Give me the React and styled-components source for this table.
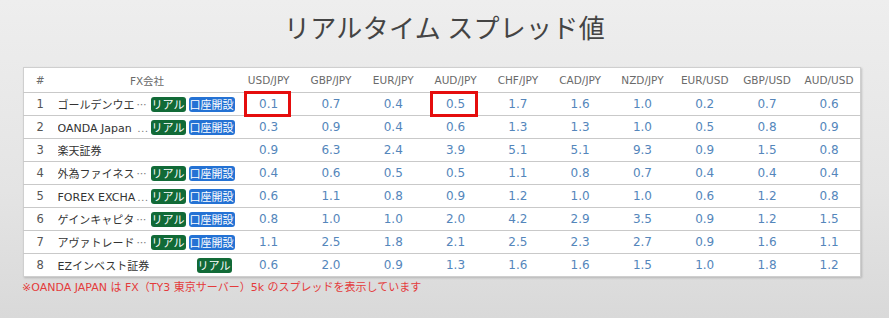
import React from "react";
import styled, { createGlobalStyle, css } from "styled-components";

const GlobalStyle = createGlobalStyle`
  html, body {
    margin: 0;
    padding: 0;
  }
  body {
    background: linear-gradient(to bottom, #eeeeee 0%, #e4e4e4 60%, #d9d9d9 100%);
    min-height: 318px;
    font-family: "DejaVu Sans", "Noto Sans CJK JP", sans-serif;
  }
`;

const Page = styled.div`
  width: 889px;
  height: 318px;
  padding-top: 10px;
  box-sizing: border-box;
`;

const Title = styled.h1`
  margin: 0 0 23px;
  text-align: center;
  font-family: "Noto Sans CJK JP", sans-serif;
  font-weight: 400;
  font-size: 26px;
  line-height: 34px;
  color: #444;
  letter-spacing: 0.3px;
`;

const TableWrap = styled.div`
  margin-left: 23px;
  width: 838px;
`;

const Table = styled.table`
  width: 100%;
  table-layout: fixed;
  border-collapse: collapse;
  background: #fff;
  border: 1px solid #cfcfcf;
  box-shadow: 1px 1px 2px rgba(0, 0, 0, 0.18);
`;

const HeadCell = styled.th`
  height: 24px;
  padding: 0;
  font-weight: 400;
  font-size: 10.5px;
  color: #6a6a6a;
  text-align: center;
  border-bottom: 1px solid #c9c9c9;
  font-family: "DejaVu Sans", "Noto Sans CJK JP", sans-serif;
`;

const Row = styled.tr`
  height: 23px;
  & + & td {
    border-top: 1px solid #c9c9c9;
  }
`;

const NumCell = styled.td`
  padding: 0;
  text-align: center;
  font-size: 11.5px;
  color: #555;
`;

const NameCell = styled.td`
  padding: 0 3px 0 1px;
`;

const NameBox = styled.div`
  display: flex;
  align-items: center;
  gap: 3px;
`;

const NameText = styled.span`
  flex: 1;
  min-width: 0;
  overflow: hidden;
  white-space: nowrap;
  font-size: 11px;
  color: #333;
`;

// cut-off marker after a shortened company name
const More = styled.span`
  margin-left: 2px;
  font-family: "Noto Sans CJK JP", sans-serif;
  font-size: 10px;
  color: #777;
`;

const Badge = styled.span`
  flex: none;
  height: 15px;
  line-height: 15px;
  padding: 0 1px;
  border-radius: 3px;
  color: #fff;
  font-family: "Noto Sans CJK JP", sans-serif;
  font-size: 11px;
  background: ${p => (p.blue ? "#2472d4" : "#116a37")};
  ${p =>
    p.alone &&
    css`
      margin-right: 3px;
    `}
`;

const ValueCell = styled.td`
  position: relative;
  padding: 0;
  text-align: center;
  font-size: 12px;
  color: #5486bb;
  ${p =>
    p.marked &&
    css`
      &::after {
        content: "";
        position: absolute;
        left: 6px;
        right: 9px;
        top: -2px;
        bottom: -2px;
        border: 3px solid #e50d0d;
      }
    `}
`;

const Note = styled.p`
  margin: 3px 0 0 -1px;
  font-family: "DejaVu Sans", "Noto Sans CJK JP", sans-serif;
  font-size: 11px;
  line-height: 16px;
  color: #e43b3b;
`;

const pairs = [
  "USD/JPY",
  "GBP/JPY",
  "EUR/JPY",
  "AUD/JPY",
  "CHF/JPY",
  "CAD/JPY",
  "NZD/JPY",
  "EUR/USD",
  "GBP/USD",
  "AUD/USD"
];

const rows = [
  { name: "ゴールデンウエイ・ジャパン", short: "ゴールデンウエ", real: true, open: true, vals: "0.1 0.7 0.4 0.5 1.7 1.6 1.0 0.2 0.7 0.6" },
  { name: "OANDA Japan 株式会社", short: "OANDA Japan ", real: true, open: true, vals: "0.3 0.9 0.4 0.6 1.3 1.3 1.0 0.5 0.8 0.9" },
  { name: "楽天証券", vals: "0.9 6.3 2.4 3.9 5.1 5.1 9.3 0.9 1.5 0.8" },
  { name: "外為ファイネスト", short: "外為ファイネス", real: true, open: true, vals: "0.4 0.6 0.5 0.5 1.1 0.8 0.7 0.4 0.4 0.4" },
  { name: "FOREX EXCHANGE", short: "FOREX EXCHA", real: true, open: true, vals: "0.6 1.1 0.8 0.9 1.2 1.0 1.0 0.6 1.2 0.8" },
  { name: "ゲインキャピタル・ジャパン", short: "ゲインキャピタ", real: true, open: true, vals: "0.8 1.0 1.0 2.0 4.2 2.9 3.5 0.9 1.2 1.5" },
  { name: "アヴァトレード・ジャパン", short: "アヴァトレード", real: true, open: true, vals: "1.1 2.5 1.8 2.1 2.5 2.3 2.7 0.9 1.6 1.1" },
  { name: "EZインベスト証券", real: true, vals: "0.6 2.0 0.9 1.3 1.6 1.6 1.5 1.0 1.8 1.2" }
];

// cells outlined in red on the first row (USD/JPY, AUD/JPY)
const marked = [0, 3];

function SpreadRow({ no, row }) {
  return (
    <Row>
      <NumCell>{no}</NumCell>
      <NameCell>
        <NameBox>
          <NameText title={row.name}>
            {row.short || row.name}
            {row.short && <More>…</More>}
          </NameText>
          {row.real && <Badge alone={!row.open}>リアル</Badge>}
          {row.open && <Badge blue>口座開設</Badge>}
        </NameBox>
      </NameCell>
      {row.vals.split(" ").map((v, i) => (
        <ValueCell key={i} marked={no === 1 && marked.includes(i)}>
          {v}
        </ValueCell>
      ))}
    </Row>
  );
}

export default function App() {
  return (
    <Page>
      <GlobalStyle />
      <Title>リアルタイム スプレッド値</Title>
      <TableWrap>
        <Table>
          <colgroup>
            <col style={{ width: 33 }} />
            <col style={{ width: 181 }} />
            {pairs.map(p => (
              <col key={p} />
            ))}
          </colgroup>
          <thead>
            <tr>
              <HeadCell>#</HeadCell>
              <HeadCell>FX会社</HeadCell>
              {pairs.map(p => (
                <HeadCell key={p}>{p}</HeadCell>
              ))}
            </tr>
          </thead>
          <tbody>
            {rows.map((row, i) => (
              <SpreadRow key={i} no={i + 1} row={row} />
            ))}
          </tbody>
        </Table>
        <Note>※OANDA JAPAN は FX（TY3 東京サーバー）5k のスプレッドを表示しています</Note>
      </TableWrap>
    </Page>
  );
}
